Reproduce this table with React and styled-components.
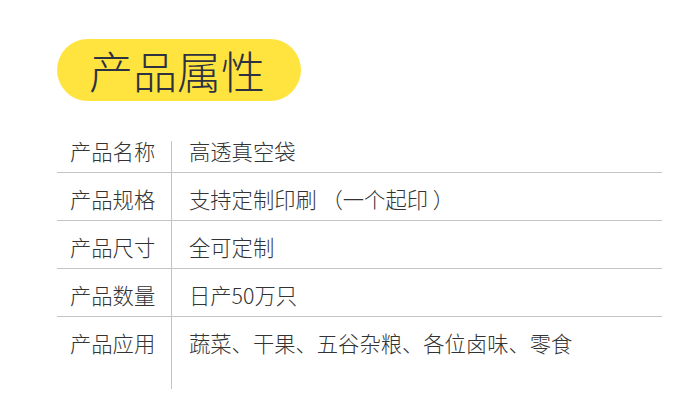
import React from "react";
import styled, { createGlobalStyle } from "styled-components";

const GlobalStyle = createGlobalStyle`
  html, body {
    margin: 0;
    padding: 0;
    background: #ffffff;
  }
  body {
    font-family: "Noto Sans CJK SC", "Noto Sans", sans-serif;
    font-weight: 300;
  }
`;

const Page = styled.div`
  width: 690px;
  height: 402px;
  padding: 39px 0 0 57px;
  box-sizing: border-box;
  overflow: hidden;
`;

const Badge = styled.div`
  width: 244px;
  height: 62px;
  border-radius: 31px;
  background: #ffe440;
  color: #2e3140;
  font-size: 44px;
  font-weight: 300;
  line-height: 62px;
  text-align: center;
  padding-right: 4px;
  box-sizing: border-box;
`;

const Table = styled.div`
  width: 605px;
  margin-top: 40px;
  color: #333333;
  font-size: 21.3px;
  line-height: 20px;
`;

const Row = styled.div`
  display: flex;
  border-bottom: ${props => (props.last ? "none" : "1px solid #c4c4c4")};
`;

const Label = styled.div`
  width: 115px;
  flex-shrink: 0;
  padding: ${props => props.pad};
  padding-left: 13px;
  box-sizing: border-box;
  border-right: 1px solid #c4c4c4;
  white-space: nowrap;
`;

const Value = styled.div`
  flex: 1;
  padding: ${props => props.pad};
  padding-left: 17px;
  white-space: pre;
`;

const rows = [
  ["产品名称", "高透真空袋"],
  ["产品规格", "支持定制印刷 （一个起印 ）"],
  ["产品尺寸", "全可定制"],
  ["产品数量", "日产50万只"],
  ["产品应用", "蔬菜、干果、五谷杂粮、各位卤味、零食"],
];

const App = () => (
  <Page>
    <GlobalStyle />
    <Badge>产品属性</Badge>
    <Table>
      {rows.map(([label, value], i) => {
        const first = i === 0;
        const last = i === rows.length - 1;
        const pad = `${first ? 0 : 16}px 0 ${last ? 36 : 11}px`;
        return (
          <Row key={label} last={last}>
            <Label pad={pad}>{label}</Label>
            <Value pad={pad}>{value}</Value>
          </Row>
        );
      })}
    </Table>
  </Page>
);

export default App;
